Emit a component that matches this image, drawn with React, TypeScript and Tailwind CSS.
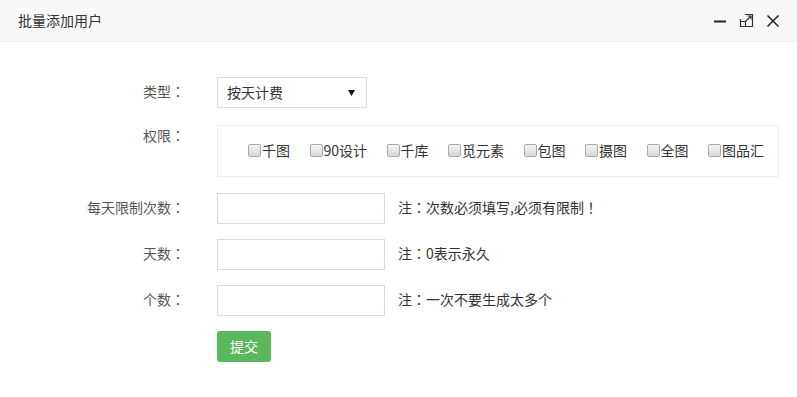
const perms = ["千图", "90设计", "千库", "觅元素", "包图", "摄图", "全图", "图品汇"];

// full-width punctuation is centred in the TC face, as in the original
function T({ s }: { s: string }) {
  return (
    <>
      {s.split(/([：！])/).map((part, i) =>
        part === "：" || part === "！" ? (
          <span key={i} className="font-['Noto_Sans_CJK_TC']">
            {part}
          </span>
        ) : (
          part
        )
      )}
    </>
  );
}

function Box() {
  return (
    <span className="mr-[1px] inline-block h-[13px] w-[13px] rounded-[2px] border border-[#a9a9a9] bg-gradient-to-b from-[#f4f4f4] to-[#d8d8d8]" />
  );
}

function Row({ label, note }: { label: string; note: string }) {
  return (
    <div className="mb-[15px] flex items-center">
      <div className="w-[185px] pb-[3px] text-right">
        <T s={label} />
      </div>
      <input className="ml-[32px] h-[31px] w-[168px] border border-[#d9d9d9] bg-white px-2 outline-none" />
      <div className="ml-[13px] pb-[3px] text-[#333]">
        <T s={note} />
      </div>
    </div>
  );
}

export default function App() {
  return (
    <div
      className="h-[397px] w-[797px] overflow-hidden bg-white text-[14px] leading-[20px] text-[#555]"
      style={{ fontFamily: '"Noto Sans CJK SC", "Liberation Sans", sans-serif' }}
    >
      {/* header */}
      <div className="flex h-[42px] items-center border-b border-[#eee] bg-[#f8f8f8] pl-[18px] pr-[17px]">
        <div className="flex-1 pb-[2px] text-[#333]">批量添加用户</div>
        <div className="flex items-center gap-[12px] text-[#222]">
          <svg width="14" height="14" viewBox="0 0 14 14">
            <path d="M1 7.5H13" stroke="#222" strokeWidth="2" />
          </svg>
          <svg width="15" height="15" viewBox="0 0 15 15" fill="none" stroke="#333" strokeWidth="1.2">
            <path d="M6 1.5H13.5V13.5H1.5V6" />
            <path d="M1.5 8.5H6.5V13.5" />
            <path d="M6.5 8.5L12 3M8.5 3H12V6.5" />
          </svg>
          <svg width="14" height="14" viewBox="0 0 14 14" fill="none" stroke="#222" strokeWidth="1.5">
            <path d="M1.5 1.5L12.5 12.5M12.5 1.5L1.5 12.5" />
          </svg>
        </div>
      </div>

      {/* form */}
      <div className="pt-[35px]">
        <div className="mb-[17px] flex items-center">
          <div className="w-[185px] pb-[3px] text-right">
            <T s="类型：" />
          </div>
          <div className="ml-[32px] flex h-[31px] w-[150px] items-center justify-between border border-[#d9d9d9] pl-[9px] pr-[11px] text-[#333]">
            <span className="pb-[2px]">按天计费</span>
            <svg width="7" height="6" viewBox="0 0 7 6">
              <path d="M0 0H7L3.5 6Z" fill="#111" />
            </svg>
          </div>
        </div>

        <div className="mb-[16px] flex items-start">
          <div className="w-[185px] text-right">
            <T s="权限：" />
          </div>
          <div className="ml-[32px] flex h-[52px] w-[562px] items-center gap-[19.5px] border border-[#eee] pb-[2px] pl-[30px] text-[#333]">
            {perms.map((p) => (
              <label key={p} className="flex items-center">
                <Box />
                {p}
              </label>
            ))}
          </div>
        </div>

        <Row label="每天限制次数：" note="注：次数必须填写,必须有限制！" />
        <Row label="天数：" note="注：0表示永久" />
        <Row label="个数：" note="注：一次不要生成太多个" />

        <div className="ml-[217px]">
          <button className="h-[31px] w-[54px] rounded-[3px] bg-[#5cb85c] pb-[2px] text-white">提交</button>
        </div>
      </div>
    </div>
  );
}
